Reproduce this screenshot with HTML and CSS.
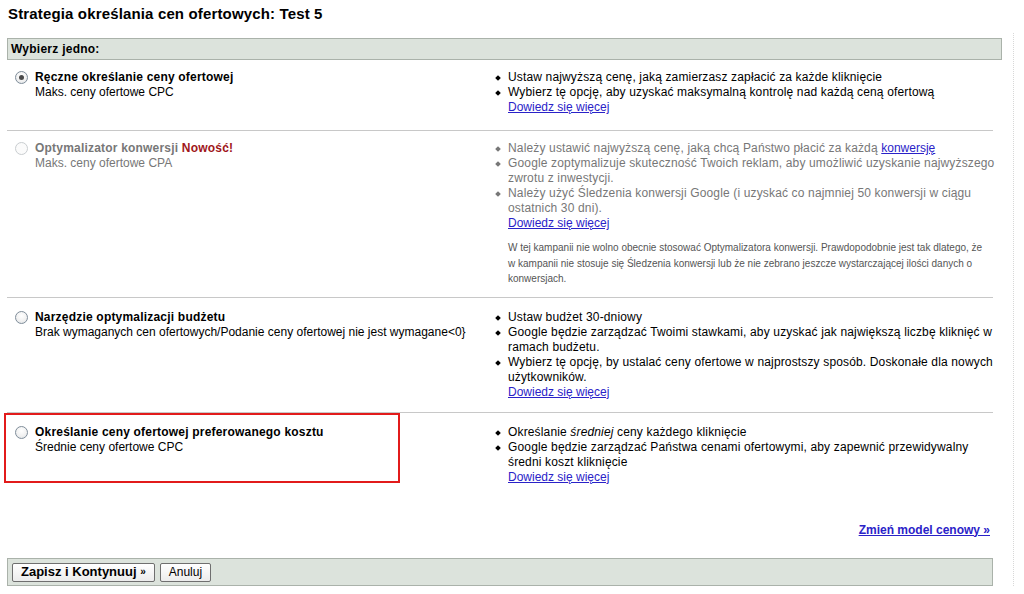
FILE: index.html
```html
<!DOCTYPE html>
<html lang="pl">
<head>
<meta charset="utf-8">
<title>Strategia określania cen ofertowych</title>
<link rel="stylesheet" href="styles.css">
</head>
<body>
<div class="page">
  <h1 class="title">Strategia określania cen ofertowych: Test 5</h1>
  <div class="bar head-bar">Wybierz jedno:</div>

  <div class="option first">
    <div class="opt-left">
      <span class="radio checked"></span>
      <div class="opt-text">
        <div class="opt-name">Ręczne określanie ceny ofertowej</div>
        <div class="opt-sub">Maks. ceny ofertowe CPC</div>
      </div>
    </div>
    <div class="opt-right">
      <ul class="bullets">
        <li>Ustaw najwyższą cenę, jaką zamierzasz zapłacić za każde kliknięcie</li>
        <li>Wybierz tę opcję, aby uzyskać maksymalną kontrolę nad każdą ceną ofertową</li>
      </ul>
      <a class="more" href="#">Dowiedz się więcej</a>
    </div>
  </div>

  <div class="option disabled">
    <div class="opt-left">
      <span class="radio off"></span>
      <div class="opt-text">
        <div class="opt-name">Optymalizator konwersji <span class="new">Nowość!</span></div>
        <div class="opt-sub">Maks. ceny ofertowe CPA</div>
      </div>
    </div>
    <div class="opt-right">
      <ul class="bullets">
        <li>Należy ustawić najwyższą cenę, jaką chcą Państwo płacić za każdą <a href="#">konwersję</a></li>
        <li>Google zoptymalizuje skuteczność Twoich reklam, aby umożliwić uzyskanie najwyższego zwrotu z inwestycji.</li>
        <li>Należy użyć Śledzenia konwersji Google (i uzyskać co najmniej 50 konwersji w ciągu ostatnich 30 dni).</li>
      </ul>
      <a class="more" href="#">Dowiedz się więcej</a>
      <p class="note">W tej kampanii nie wolno obecnie stosować Optymalizatora konwersji. Prawdopodobnie jest tak dlatego, że w kampanii nie stosuje się Śledzenia konwersji lub że nie zebrano jeszcze wystarczającej ilości danych o konwersjach.</p>
    </div>
  </div>

  <div class="option">
    <div class="opt-left">
      <span class="radio"></span>
      <div class="opt-text">
        <div class="opt-name">Narzędzie optymalizacji budżetu</div>
        <div class="opt-sub">Brak wymaganych cen ofertowych/Podanie ceny ofertowej nie jest wymagane&lt;0}</div>
      </div>
    </div>
    <div class="opt-right">
      <ul class="bullets">
        <li>Ustaw budżet 30-dniowy</li>
        <li>Google będzie zarządzać Twoimi stawkami, aby uzyskać jak największą liczbę kliknięć w ramach budżetu.</li>
        <li>Wybierz tę opcję, by ustalać ceny ofertowe w najprostszy sposób. Doskonałe dla nowych użytkowników.</li>
      </ul>
      <a class="more" href="#">Dowiedz się więcej</a>
    </div>
  </div>

  <div class="option last">
    <div class="highlight"></div>
    <div class="opt-left">
      <span class="radio"></span>
      <div class="opt-text">
        <div class="opt-name">Określanie ceny ofertowej preferowanego kosztu</div>
        <div class="opt-sub">Średnie ceny ofertowe CPC</div>
      </div>
    </div>
    <div class="opt-right">
      <ul class="bullets">
        <li>Określanie <em>średniej</em> ceny każdego kliknięcie</li>
        <li>Google będzie zarządzać Państwa cenami ofertowymi, aby zapewnić przewidywalny średni koszt kliknięcie</li>
      </ul>
      <a class="more" href="#">Dowiedz się więcej</a>
    </div>
  </div>

  <div class="change-row"><a class="change" href="#">Zmień model cenowy »</a></div>

  <div class="bar foot-bar">
    <button class="btn btn-main" type="button">Zapisz i Kontynuuj <span class="raquo">»</span></button>
    <button class="btn" type="button">Anuluj</button>
  </div>
</div>
<div class="edge"></div>
</body>
</html>
```

FILE: styles.css
```css
html, body {
  margin: 0;
  padding: 0;
  background: #ffffff;
}
body {
  font-family: Arial, "Liberation Sans", sans-serif;
  font-size: 12px;
  color: #000;
  position: relative;
  overflow: hidden;
}
.page {
  width: 986px;
  padding: 0 0 0 7px;
}
.title {
  margin: 0;
  padding: 5px 0 0 1px;
  font-size: 15px;
  line-height: 18px;
  font-weight: bold;
  letter-spacing: 0.15px;
  height: 38px;
  box-sizing: border-box;
}
.bar {
  background: #dce3dc;
  border: 1px solid #aab2aa;
  box-sizing: border-box;
}
.head-bar {
  width: 995px;
  height: 22px;
  padding: 3px 0 0 3px;
  font-size: 12px;
  font-weight: bold;
  letter-spacing: 0.25px;
  line-height: 15px;
}
.option {
  display: grid;
  grid-template-columns: 488px 1fr;
  border-bottom: 1px solid #c8c8c8;
  padding: 12px 0 12px 0;
  line-height: 15px;
  position: relative;
}
.option.first {
  padding: 10px 0 15px 0;
}
.option.disabled {
  padding: 10px 0 10px 0;
}
.option.last {
  border-bottom: none;
}
.opt-left {
  display: flex;
  align-items: flex-start;
  padding-left: 8px;
}
.opt-text {
  padding-left: 7px;
}
.opt-name {
  font-weight: bold;
  font-size: 12px;
  letter-spacing: 0.2px;
}
.radio {
  width: 11px;
  height: 11px;
  border: 1px solid #7f8d9a;
  border-radius: 50%;
  margin-top: 1px;
  background: radial-gradient(circle at 50% 35%, #ffffff 0%, #f0f0f0 60%, #d8dde2 100%);
  box-sizing: content-box;
  position: relative;
  flex: none;
}
.radio.checked::after {
  content: "";
  position: absolute;
  left: 3px;
  top: 3px;
  width: 5px;
  height: 5px;
  border-radius: 50%;
  background: #4a4a4a;
}
.radio.off {
  border-color: #c9cdd0;
  background: #fbfbfb;
}
.disabled .opt-left,
.disabled .bullets li {
  color: #777;
}
.new {
  color: #a0161a;
}
.opt-right {
  margin-right: -8px;
}
.bullets {
  list-style: none;
  margin: 0;
  padding: 0;
}
.bullets li {
  position: relative;
  padding-left: 13px;
  letter-spacing: 0.15px;
}
.bullets li a {
  letter-spacing: 0;
}
.bullets li::before {
  content: "";
  position: absolute;
  left: 1px;
  top: 6px;
  width: 4px;
  height: 4px;
  background: #000;
  transform: rotate(45deg);
}
.disabled .bullets li::before {
  background: #777;
}
a {
  color: #2a22c8;
  text-decoration: underline;
}
.more {
  display: inline-block;
  margin-left: 13px;
}
.note {
  margin: 9px 12px 0 13px;
  font-size: 10px;
  line-height: 15.5px;
  color: #555;
}
.highlight {
  position: absolute;
  left: -3px;
  top: 0;
  width: 392px;
  height: 66px;
  border: 2px solid #e21b1b;
  pointer-events: none;
}
.change-row {
  display: flex;
  justify-content: flex-end;
  padding: 26px 3px 0 0;
  height: 61px;
  box-sizing: border-box;
}
.change {
  font-weight: bold;
  font-size: 12px;
  line-height: 15px;
}
.foot-bar {
  height: 28px;
  padding: 4px 0 0 4px;
  display: flex;
  gap: 5px;
  align-items: flex-start;
}
.btn {
  font-family: Arial, "Liberation Sans", sans-serif;
  font-size: 12px;
  line-height: 14px;
  height: 19px;
  padding: 0 8px;
  background: linear-gradient(#ffffff, #ececec);
  border: 1px solid #6f6f6f;
  border-radius: 2px;
  color: #000;
}
.btn-main {
  font-weight: bold;
  font-size: 13px;
}
.raquo {
  font-size: 10px;
  vertical-align: 1px;
}
.edge {
  position: absolute;
  left: 1013px;
  top: 33px;
  width: 0;
  height: 561px;
  border-left: 1px dotted #d8d8d8;
}
```
